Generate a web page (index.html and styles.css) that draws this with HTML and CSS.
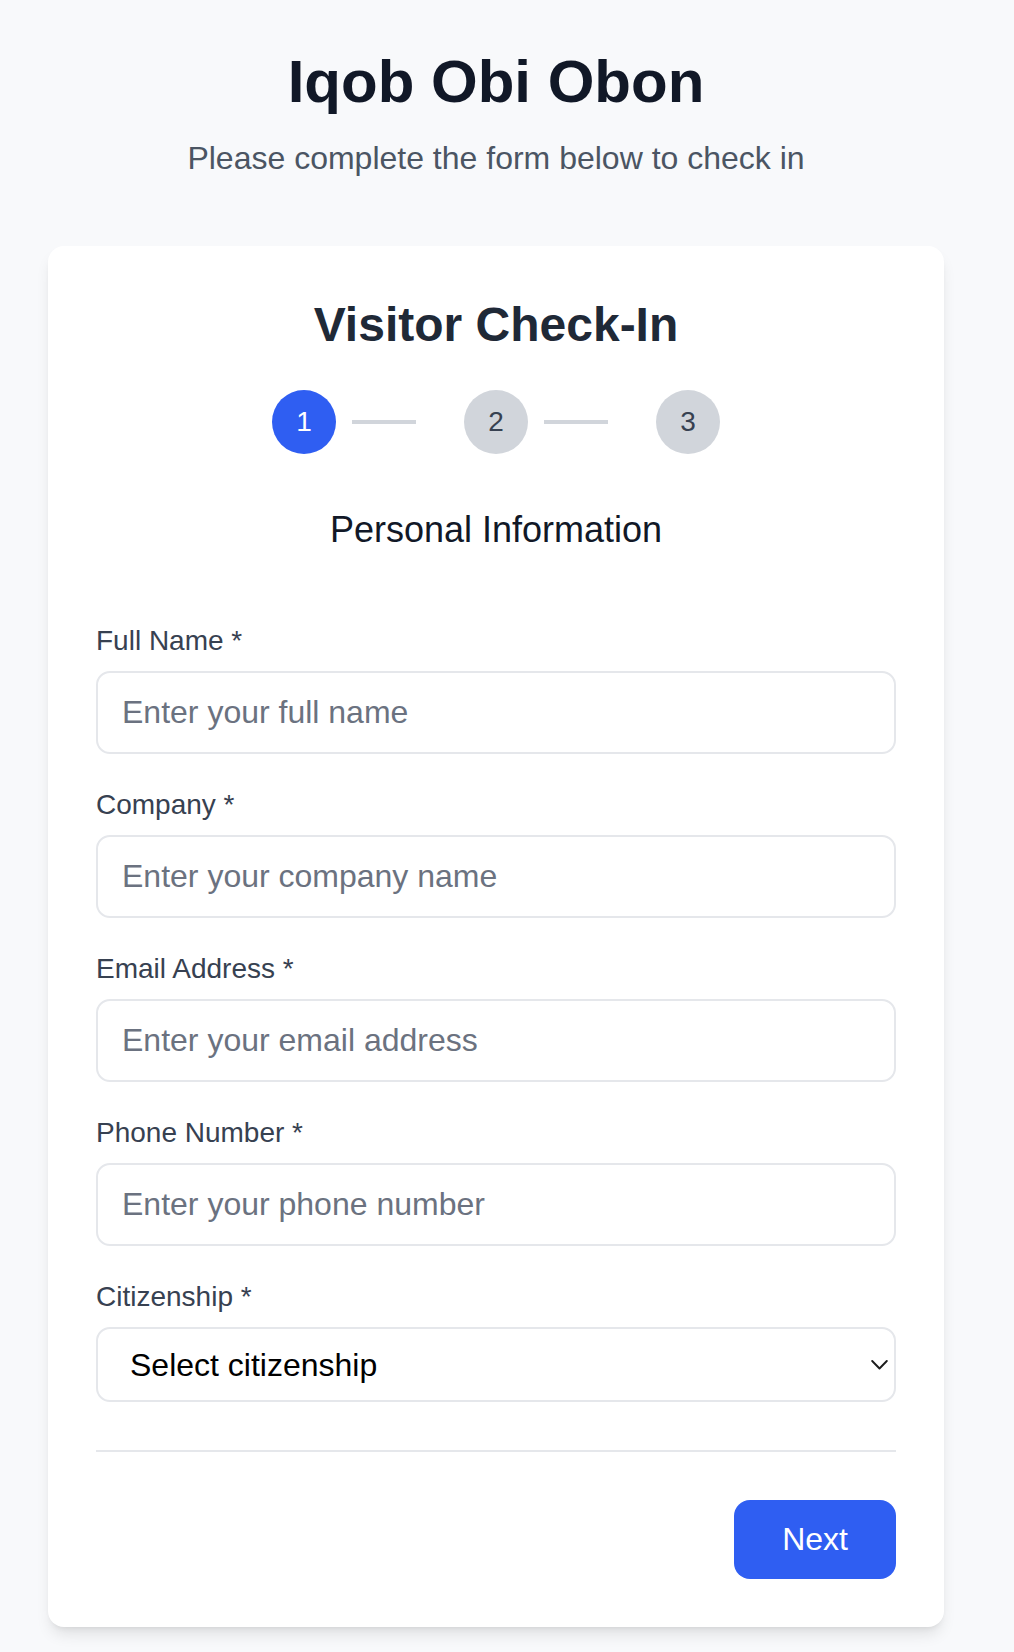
FILE: index.html
```html
<!DOCTYPE html>
<html lang="en">
<head>
<meta charset="utf-8">
<title>Visitor Check-In</title>
<link rel="stylesheet" href="styles.css">
</head>
<body>
<main class="page">
  <header class="page-header">
    <h1 class="page-title">Iqob Obi Obon</h1>
    <p class="page-subtitle">Please complete the form below to check in</p>
  </header>

  <section class="card">
    <h2 class="card-title">Visitor Check-In</h2>

    <div class="stepper">
      <div class="step">
        <span class="step-circle active">1</span>
        <span class="step-line"></span>
      </div>
      <div class="step">
        <span class="step-circle">2</span>
        <span class="step-line"></span>
      </div>
      <div class="step">
        <span class="step-circle">3</span>
      </div>
    </div>

    <h3 class="section-title">Personal Information</h3>

    <form class="form">
      <div class="field">
        <label class="field-label" for="fullName">Full Name *</label>
        <input class="field-input" id="fullName" type="text" placeholder="Enter your full name">
      </div>
      <div class="field">
        <label class="field-label" for="company">Company *</label>
        <input class="field-input" id="company" type="text" placeholder="Enter your company name">
      </div>
      <div class="field">
        <label class="field-label" for="email">Email Address *</label>
        <input class="field-input" id="email" type="email" placeholder="Enter your email address">
      </div>
      <div class="field">
        <label class="field-label" for="phone">Phone Number *</label>
        <input class="field-input" id="phone" type="tel" placeholder="Enter your phone number">
      </div>
      <div class="field">
        <label class="field-label" for="citizenship">Citizenship *</label>
        <div class="select-wrap">
          <select class="field-select" id="citizenship">
            <option>Select citizenship</option>
          </select>
          <svg class="select-chevron" width="17" height="11" viewBox="0 0 17 11" aria-hidden="true">
            <polyline points="1.2,1.5 8.5,9 15.8,1.5" fill="none" stroke="#1c1c1c" stroke-width="1.9" stroke-linecap="round" stroke-linejoin="round"/>
          </svg>
        </div>
      </div>

      <div class="divider"></div>

      <div class="actions">
        <button type="button" class="btn-primary">Next</button>
      </div>
    </form>
  </section>
</main>
</body>
</html>
```

FILE: styles.css
```css
* {
  box-sizing: border-box;
}

html {
  background: #f8f9fb;
}

body {
  margin: 0;
  padding: 0 22px 25px 0;
  background: #f8f9fb;
  font-family: "Liberation Sans", Arial, Helvetica, sans-serif;
  color: #111827;
}

.page {
  width: 896px;
  margin: 0 auto;
}

.page-header {
  padding-top: 46px;
  text-align: center;
}

.page-title {
  margin: 0;
  font-size: 60px;
  line-height: 72px;
  font-weight: 700;
  color: #111827;
}

.page-subtitle {
  margin: 20px 0 0;
  font-size: 32px;
  line-height: 40px;
  color: #4b5563;
}

.card {
  margin-top: 68px;
  background: #ffffff;
  border-radius: 16px;
  padding: 48px;
  box-shadow: 0 10px 15px -3px rgba(0, 0, 0, 0.1), 0 4px 6px -4px rgba(0, 0, 0, 0.1);
}

.card-title {
  margin: 0;
  text-align: center;
  font-size: 48px;
  line-height: 62px;
  font-weight: 700;
  color: #1f2937;
}

.stepper {
  margin-top: 34px;
  display: flex;
  justify-content: center;
}

.step {
  display: flex;
  align-items: center;
}

.step-circle {
  width: 64px;
  height: 64px;
  border-radius: 50%;
  background: #d1d5db;
  color: #374151;
  font-size: 28px;
  display: flex;
  align-items: center;
  justify-content: center;
}

.step-circle.active {
  background: #2f5ef2;
  color: #ffffff;
}

.step-line {
  width: 64px;
  height: 4px;
  background: #d1d5db;
  margin: 0 48px 0 16px;
}

.section-title {
  margin: 54px 0 0;
  text-align: center;
  font-size: 36px;
  line-height: 44px;
  font-weight: 400;
  color: #111827;
}

.form {
  margin-top: 71px;
  display: flex;
  flex-direction: column;
  gap: 33px;
}

.field {
  display: flex;
  flex-direction: column;
  gap: 12px;
}

.field-label {
  font-size: 28px;
  line-height: 36px;
  color: #374151;
}

.field-input {
  width: 100%;
  height: 83px;
  border: 2px solid #e5e7eb;
  border-radius: 14px;
  padding: 0 24px;
  font-family: "Liberation Sans", Arial, Helvetica, sans-serif;
  font-size: 32px;
  color: #111827;
  background: #ffffff;
  outline: none;
}

.field-input::placeholder {
  color: #6b7280;
}

.select-wrap {
  position: relative;
}

.field-select {
  width: 100%;
  height: 75px;
  border: 2px solid #e5e7eb;
  border-radius: 14px;
  padding: 0 40px 0 32px;
  font-family: "Liberation Sans", Arial, Helvetica, sans-serif;
  font-size: 32px;
  color: #000000;
  background: #ffffff;
  appearance: none;
  -webkit-appearance: none;
  outline: none;
}

.select-chevron {
  position: absolute;
  right: 8px;
  top: 50%;
  transform: translateY(-50%);
  pointer-events: none;
}

.divider {
  margin-top: 15px;
  height: 2px;
  background: #e5e7eb;
}

.actions {
  margin-top: 15px;
  display: flex;
  justify-content: flex-end;
}

.btn-primary {
  height: 79px;
  padding: 0 48px;
  border: none;
  border-radius: 16px;
  background: #2f5ef2;
  color: #ffffff;
  font-family: "Liberation Sans", Arial, Helvetica, sans-serif;
  font-size: 32px;
  cursor: pointer;
}
```
